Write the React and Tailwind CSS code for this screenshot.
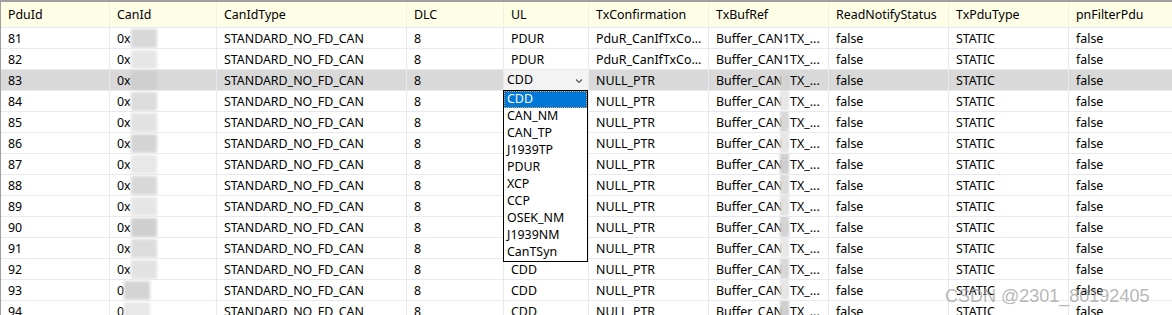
import React from 'react';

const cols = [
  { key: 'pdu', title: 'PduId', w: 'w-[109px]' },
  { key: 'can', title: 'CanId', w: 'w-[107px]' },
  { key: 'type', title: 'CanIdType', w: 'w-[190px]' },
  { key: 'dlc', title: 'DLC', w: 'w-[97px]' },
  { key: 'ul', title: 'UL', w: 'w-[85px]' },
  { key: 'conf', title: 'TxConfirmation', w: 'w-[120px]' },
  { key: 'buf', title: 'TxBufRef', w: 'w-[120px]' },
  { key: 'notify', title: 'ReadNotifyStatus', w: 'w-[120px]' },
  { key: 'ptype', title: 'TxPduType', w: 'w-[120px]' },
  { key: 'filter', title: 'pnFilterPdu', w: 'w-[104px]' },
];

const ids = [81, 82, 83, 84, 85, 86, 87, 88, 89, 90, 91, 92, 93, 94];
const shades = ['bg-[#d8d8d8]', 'bg-[#e6e6e6]', 'bg-[#cfcfcf]', 'bg-[#dcdcdc]', 'bg-[#e2e2e2]', 'bg-[#d4d4d4]', 'bg-[#e8e8e8]'];

const options = ['CDD', 'CAN_NM', 'CAN_TP', 'J1939TP', 'PDUR', 'XCP', 'CCP', 'OSEK_NM', 'J1939NM', 'CanTSyn'];

const Cell = ({ w, children, className = '' }) => (
  <div className={`${w} shrink-0 h-full border-r border-[#e6e9ef] pl-[7px] pt-[2px] flex items-center whitespace-nowrap overflow-hidden ${className}`}>
    {children}
  </div>
);

const Blur = ({ i }) => (
  <span className={`inline-block h-[19px] w-[26px] -mt-[2px] ${shades[i % shades.length]} blur-[1.5px]`} />
);

export default function App() {
  return (
    <div className="relative w-[1172px] h-[315px] overflow-hidden bg-white text-[12.4px] text-black border-t-2 border-l border-[#a0a0a0]" style={{ fontFamily: '"Noto Sans", "Noto Sans CJK SC", sans-serif' }}>
      {/* header */}
      <div className="flex h-[26px] bg-[#fefde6] border-b border-[#e6e9ef]">
        {cols.map((c) => (
          <Cell key={c.key} w={c.w} className="border-[#f3f1df]">{c.title}</Cell>
        ))}
      </div>

      {ids.map((id, i) => {
        const sel = id === 83;
        const ul = id < 83 ? 'PDUR' : 'CDD';
        return (
          <div key={id} className={`flex h-[21px] border-b border-[#e6e9ef] ${sel ? 'bg-[#d9d9d9]' : ''}`}>
            <Cell w="w-[109px]">{id}</Cell>
            <Cell w="w-[107px]" className="pl-[7px]">
              <span>{id >= 93 ? '0' : '0x'}</span>
              <Blur i={i} />
            </Cell>
            <Cell w="w-[190px]" className="pl-[6px]">STANDARD_NO_FD_CAN</Cell>
            <Cell w="w-[97px]">8</Cell>
            {sel ? (
              <div className="w-[85px] shrink-0 h-full border-r border-[#e6e9ef] bg-[#f3f3f3] pl-[3px] pr-[5px] flex items-center justify-between">
                <span>CDD</span>
                <svg width="8" height="6" viewBox="0 0 8 6" className="mt-[2px]">
                  <polyline points="1,1.5 4,4.5 7,1.5" fill="none" stroke="#555" strokeWidth="1.2" />
                </svg>
              </div>
            ) : (
              <Cell w="w-[85px]" className="pl-[5px]">{ul}</Cell>
            )}
            <Cell w="w-[120px]" className="pl-[6px]">{id < 83 ? 'PduR_CanIfTxCo...' : 'NULL_PTR'}</Cell>
            <Cell w="w-[120px]" className="pl-[7px]">
              {id < 83 ? (
                'Buffer_CAN1TX_...'
              ) : (
                <span className="relative">
                  Buffer_CAN1TX_...
                  <span className={`absolute left-[64px] top-[-3px] h-[21px] w-[9px] ${shades[(i + 3) % shades.length]} blur-[1px]`} />
                </span>
              )}
            </Cell>
            <Cell w="w-[120px]">false</Cell>
            <Cell w="w-[120px]">STATIC</Cell>
            <Cell w="w-[104px]" className="border-r-0">false</Cell>
          </div>
        );
      })}

      {/* dropdown list */}
      <div className="absolute left-[502px] top-[88px] w-[85px] h-[172px] bg-white border border-black flex flex-col">
        {options.map((o, i) => (
          <div
            key={o}
            className={`h-[17px] pl-[3px] flex items-center whitespace-nowrap ${i === 0 ? 'bg-[#0078d7] text-white outline-1 outline-dotted outline-[#e8a050] -outline-offset-1' : ''}`}
          >
            {o}
          </div>
        ))}
      </div>

      {/* watermark */}
      <div className="absolute left-[944px] top-[285px] text-[18px] leading-none text-[#a0a0a0]/75 whitespace-nowrap" style={{ fontFamily: '"Liberation Sans", Arial, sans-serif' }}>
        CSDN @2301_80192405
      </div>
    </div>
  );
}
